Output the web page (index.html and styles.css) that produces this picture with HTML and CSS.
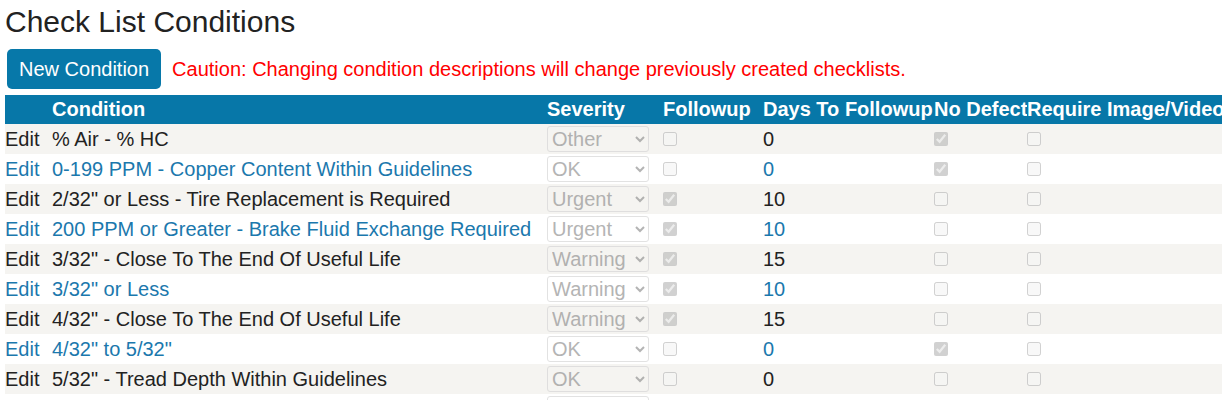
FILE: index.html
```html
<!DOCTYPE html>
<html lang="en">
<head>
<meta charset="utf-8">
<title>Check List Conditions</title>
<link rel="stylesheet" href="styles.css">
</head>
<body>
<div class="page">
  <h1 class="title">Check List Conditions</h1>
  <div class="toolbar">
    <button class="btn" type="button">New Condition</button>
    <span class="caution">Caution: Changing condition descriptions will change previously created checklists.</span>
  </div>
  <table class="grid">
    <colgroup>
      <col class="c-edit"><col class="c-cond"><col class="c-sev"><col class="c-fu"><col class="c-days"><col class="c-nd"><col class="c-img">
    </colgroup>
    <thead>
      <tr><th></th><th>Condition</th><th>Severity</th><th>Followup</th><th>Days To Followup</th><th>No Defect</th><th>Require Image/Video</th></tr>
    </thead>
    <tbody>
      <tr>
        <td>Edit</td><td>% Air - % HC</td>
        <td><select class="sel" disabled><option>OK</option><option>Warning</option><option>Urgent</option><option selected>Other</option></select></td>
        <td><input class="chk" type="checkbox" disabled></td><td>0</td>
        <td><input class="chk" type="checkbox" checked disabled></td><td><input class="chk" type="checkbox" disabled></td>
      </tr>
      <tr>
        <td>Edit</td><td>0-199 PPM - Copper Content Within Guidelines</td>
        <td><select class="sel" disabled><option selected>OK</option><option>Warning</option><option>Urgent</option><option>Other</option></select></td>
        <td><input class="chk" type="checkbox" disabled></td><td>0</td>
        <td><input class="chk" type="checkbox" checked disabled></td><td><input class="chk" type="checkbox" disabled></td>
      </tr>
      <tr>
        <td>Edit</td><td>2/32" or Less - Tire Replacement is Required</td>
        <td><select class="sel" disabled><option>OK</option><option>Warning</option><option selected>Urgent</option><option>Other</option></select></td>
        <td><input class="chk" type="checkbox" checked disabled></td><td>10</td>
        <td><input class="chk" type="checkbox" disabled></td><td><input class="chk" type="checkbox" disabled></td>
      </tr>
      <tr>
        <td>Edit</td><td>200 PPM or Greater - Brake Fluid Exchange Required</td>
        <td><select class="sel" disabled><option>OK</option><option>Warning</option><option selected>Urgent</option><option>Other</option></select></td>
        <td><input class="chk" type="checkbox" checked disabled></td><td>10</td>
        <td><input class="chk" type="checkbox" disabled></td><td><input class="chk" type="checkbox" disabled></td>
      </tr>
      <tr>
        <td>Edit</td><td>3/32" - Close To The End Of Useful Life</td>
        <td><select class="sel" disabled><option>OK</option><option selected>Warning</option><option>Urgent</option><option>Other</option></select></td>
        <td><input class="chk" type="checkbox" checked disabled></td><td>15</td>
        <td><input class="chk" type="checkbox" disabled></td><td><input class="chk" type="checkbox" disabled></td>
      </tr>
      <tr>
        <td>Edit</td><td>3/32" or Less</td>
        <td><select class="sel" disabled><option>OK</option><option selected>Warning</option><option>Urgent</option><option>Other</option></select></td>
        <td><input class="chk" type="checkbox" checked disabled></td><td>10</td>
        <td><input class="chk" type="checkbox" disabled></td><td><input class="chk" type="checkbox" disabled></td>
      </tr>
      <tr>
        <td>Edit</td><td>4/32" - Close To The End Of Useful Life</td>
        <td><select class="sel" disabled><option>OK</option><option selected>Warning</option><option>Urgent</option><option>Other</option></select></td>
        <td><input class="chk" type="checkbox" checked disabled></td><td>15</td>
        <td><input class="chk" type="checkbox" disabled></td><td><input class="chk" type="checkbox" disabled></td>
      </tr>
      <tr>
        <td>Edit</td><td>4/32" to 5/32"</td>
        <td><select class="sel" disabled><option selected>OK</option><option>Warning</option><option>Urgent</option><option>Other</option></select></td>
        <td><input class="chk" type="checkbox" disabled></td><td>0</td>
        <td><input class="chk" type="checkbox" checked disabled></td><td><input class="chk" type="checkbox" disabled></td>
      </tr>
      <tr>
        <td>Edit</td><td>5/32" - Tread Depth Within Guidelines</td>
        <td><select class="sel" disabled><option selected>OK</option><option>Warning</option><option>Urgent</option><option>Other</option></select></td>
        <td><input class="chk" type="checkbox" disabled></td><td>0</td>
        <td><input class="chk" type="checkbox" disabled></td><td><input class="chk" type="checkbox" disabled></td>
      </tr>
      <tr>
        <td>Edit</td><td>6/32" or Greater - Tread Depth Within Guidelines</td>
        <td><select class="sel" disabled><option selected>OK</option><option>Warning</option><option>Urgent</option><option>Other</option></select></td>
        <td><input class="chk" type="checkbox" disabled></td><td>0</td>
        <td><input class="chk" type="checkbox" checked disabled></td><td><input class="chk" type="checkbox" disabled></td>
      </tr>
    </tbody>
  </table>
</div>
</body>
</html>
```

FILE: styles.css
```css
html, body {
  margin: 0;
  padding: 0;
  background: #ffffff;
}

body {
  font-family: "Liberation Sans", Arial, sans-serif;
  color: #222222;
}

.page {
  padding: 0 4px 0 5px;
}

.title {
  margin: 4px 0 0 0;
  font-size: 30px;
  line-height: 35px;
  font-weight: normal;
  color: #222222;
}

.toolbar {
  display: flex;
  align-items: center;
  gap: 11px;
  margin: 10px 0 0 2px;
}

.btn {
  font-family: inherit;
  font-size: 20px;
  line-height: 24px;
  padding: 8px 12px;
  border: none;
  border-radius: 5px;
  background: #0778a9;
  color: #ffffff;
}

.caution {
  font-size: 20px;
  color: #ff0000;
}

.grid {
  margin-top: 6px;
  width: 1217px;
  table-layout: fixed;
  border-collapse: collapse;
  font-size: 20px;
  line-height: 23px;
}

.c-edit { width: 47px; }
.c-cond { width: 495px; }
.c-sev { width: 116px; }
.c-fu { width: 100px; }
.c-days { width: 171px; }
.c-nd { width: 93px; }
.c-img { width: 195px; }

.grid th,
.grid td {
  padding: 0;
  text-align: left;
  white-space: nowrap;
  vertical-align: middle;
}

.grid thead tr {
  background: #0777a8;
}

.grid th {
  height: 29px;
  color: #ffffff;
  font-weight: bold;
  overflow: hidden;
}

.grid td {
  height: 30px;
}

.grid tbody tr:nth-child(odd) {
  background: #f5f4f1;
  color: #222222;
}

.grid tbody tr:nth-child(even) {
  background: #ffffff;
  color: #1b78ad;
}

.sel {
  display: block;
  width: 102px;
  height: 26px;
  margin: 0;
  font-family: inherit;
  font-size: 20px;
  color: #959595;
  border: 1px solid #d6d6d6;
  border-radius: 3px;
  background-color: transparent;
}

.chk {
  display: block;
  width: 14px;
  height: 14px;
  margin: 0;
}
```
